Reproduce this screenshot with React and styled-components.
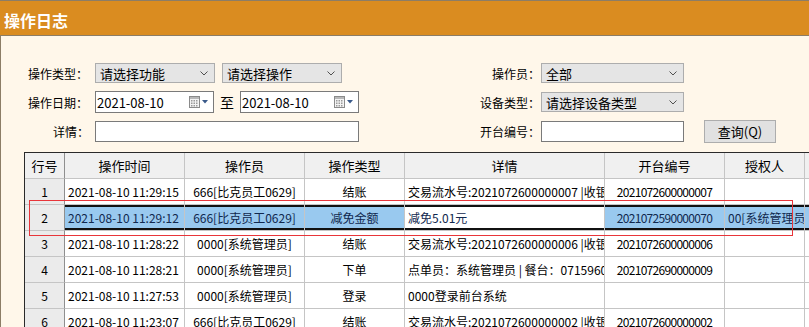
import React from 'react';
import styled, { createGlobalStyle } from 'styled-components';

const GlobalStyle = createGlobalStyle`
  html, body { margin: 0; padding: 0; background: #fff7ea; }
  body {
    font-family: "Noto Sans CJK SC", "Liberation Sans", sans-serif;
    font-size: 12px;
    color: #000;
    overflow: hidden;
  }
`;

const Page = styled.div`
  position: relative;
  width: 809px;
  height: 327px;
  overflow: hidden;
  background: #fff7ea;
`;

const TitleBar = styled.div`
  height: 30px;
  padding: 4px 0 0 4px;
  line-height: 30px;
  background: #da8c20;
  border-top: 1px solid #8c7d66;
  border-bottom: 1px solid #8c7d66;
  color: #fff;
  font-size: 16px;
  font-weight: bold;
`;

const Body = styled.div`
  border-left: 1px solid #8c7d66;
  height: 300px;
`;

const Form = styled.div`
  display: grid;
  grid-template-columns: 94px 264px 182px 143px 20px 72px;
  grid-auto-rows: 22px;
  row-gap: 7px;
  padding-top: 26px;
  align-items: center;
`;

const Label = styled.div`
  text-align: right;
  padding-right: ${p => p.pad}px;
  white-space: nowrap;
`;

const Pair = styled.div`
  display: flex;
  align-items: center;
  gap: ${p => p.gap || 0}px;
`;

const Select = styled.div`
  box-sizing: border-box;
  width: ${p => p.w}px;
  height: 20px;
  border: 1px solid #adadad;
  background: #e5e5e5;
  display: flex;
  align-items: center;
  justify-content: space-between;
  padding: 0 6px 0 4px;
  font-size: 13px;
`;

const DateBox = styled.div`
  box-sizing: border-box;
  width: 119px;
  height: 22px;
  border: 1px solid #7a7a7a;
  background: #fff;
  display: flex;
  align-items: center;
  justify-content: space-between;
  padding: 0 5px 0 1px;
  font-size: 13px;
`;

const DateIcons = styled.div`
  display: flex;
  align-items: center;
  gap: 2px;
`;

const To = styled.div`
  width: 26px;
  text-align: center;
  font-size: 14px;
`;

const TextBox = styled.div`
  box-sizing: border-box;
  width: ${p => p.w}px;
  height: 21px;
  border: 1px solid #7a7a7a;
  background: #fff;
`;

const Button = styled.div`
  grid-column: 6;
  box-sizing: border-box;
  height: 23px;
  border: 1px solid #adadad;
  background: #e1e1e1;
  display: flex;
  align-items: center;
  justify-content: center;
  font-size: 13px;
`;

const Grid = styled.table`
  margin: 10px 0 0 23px;
  border-collapse: separate;
  border-spacing: 0;
  table-layout: fixed;
  width: 881px;
  border-top: 1px solid #2a2a2a;
  border-left: 1px solid #2a2a2a;
`;

const Head = styled.th`
  box-sizing: border-box;
  width: ${p => p.w}px;
  height: 26px;
  padding: 0;
  font-weight: normal;
  background: #f0f0f0;
  border-right: 1px solid ${p => (p.num ? '#8f8f8f' : '#c5c5c5')};
  border-bottom: 1px solid #c5c5c5;
  text-align: center;
  font-size: 13px;
`;

const Cell = styled.td`
  box-sizing: border-box;
  height: 26px;
  padding: 0;
  padding-left: ${p => (p.align === 'left' ? 3 : 0)}px;
  text-align: ${p => p.align || 'center'};
  letter-spacing: ${p => (p.tight ? '-0.7px' : 'normal')};
  white-space: nowrap;
  overflow: hidden;
  background: ${p => (p.sel ? (p.edit ? '#fff' : '#99c9ef') : '#fff')};
  color: ${p => (p.sel ? '#10284e' : '#000')};
  border-right: 1px solid #c5c5c5;
  border-bottom: 1px solid #c5c5c5;
  box-shadow: ${p => (p.sel ? 'inset 0 2px #111, inset 0 -2px #111' : 'none')};
`;

const NumCell = styled.td`
  box-sizing: border-box;
  height: 26px;
  padding: 0;
  text-align: center;
  background: #ebebeb;
  border-right: 1px solid #8f8f8f;
  border-bottom: 1px solid #c5c5c5;
`;

const Marker = styled.div`
  position: absolute;
  left: 29px;
  top: 200px;
  width: 764px;
  height: 36px;
  box-sizing: border-box;
  border: 1px solid #e8353a;
  pointer-events: none;
`;

const Chevron = () => (
  <svg width="8" height="5" viewBox="0 0 8 5">
    <path d="M0.5 0.5 L4 4 L7.5 0.5" fill="none" stroke="#505050" strokeWidth="1" />
  </svg>
);

const Calendar = () => (
  <DateIcons>
    <svg width="11" height="12" viewBox="0 0 11 12">
      <rect x="0.5" y="0.5" width="10" height="11" fill="#f4f4f4" stroke="#8a8a8a" />
      <rect x="1" y="1" width="9" height="2" fill="#b8b8b8" />
      {[3, 5.5, 8].map(y => [2, 4.5, 7].map(x => (
        <rect key={x + '-' + y} x={x} y={y + 1} width="1.5" height="1.5" fill="#9a9a9a" />
      )))}
    </svg>
    <svg width="6" height="4" viewBox="0 0 6 4">
      <path d="M0 0 L6 0 L3 3.5 Z" fill="#3a5a8a" />
    </svg>
  </DateIcons>
);

const columns = [
  { title: '行号', w: 40 },
  { title: '操作时间', w: 120 },
  { title: '操作员', w: 120 },
  { title: '操作类型', w: 100 },
  { title: '详情', w: 200 },
  { title: '开台编号', w: 120 },
  { title: '授权人', w: 80 },
  { title: '', w: 100 },
];

const rows = [
  ['2021-08-10 11:29:15', '666[比克员工0629]', '结账', '交易流水号:2021072600000007 |收银员:比克员工0629', '2021072600000007', ''],
  ['2021-08-10 11:29:12', '666[比克员工0629]', '减免金额', '减免5.01元', '2021072590000070', '00[系统管理员]'],
  ['2021-08-10 11:28:22', '0000[系统管理员]', '结账', '交易流水号:2021072600000006 |收银员:系统管理员', '2021072600000006', ''],
  ['2021-08-10 11:28:21', '0000[系统管理员]', '下单', '点单员：系统管理员 | 餐台：0715960', '2021072690000009', ''],
  ['2021-08-10 11:27:53', '0000[系统管理员]', '登录', '0000登录前台系统', '', ''],
  ['2021-08-10 11:23:07', '666[比克员工0629]', '结账', '交易流水号:2021072600000002 |收银员:比克员工0629', '2021072600000002', ''],
];

const aligns = ['left', 'center', 'center', 'left', 'center', 'left'];

export default function App() {
  return (
    <Page>
      <GlobalStyle />
      <TitleBar>操作日志</TitleBar>
      <Body>
        <Form>
          <Label pad={7}>操作类型：</Label>
          <Pair gap={7}>
            <Select w={120}>请选择功能<Chevron /></Select>
            <Select w={120}>请选择操作<Chevron /></Select>
          </Pair>
          <Label pad={1}>操作员：</Label>
          <Select w={143}>全部<Chevron /></Select>
          <div />
          <div />

          <Label pad={7}>操作日期：</Label>
          <Pair>
            <DateBox>2021-08-10<Calendar /></DateBox>
            <To>至</To>
            <DateBox>2021-08-10<Calendar /></DateBox>
          </Pair>
          <Label pad={1}>设备类型：</Label>
          <Select w={143}>请选择设备类型<Chevron /></Select>
          <div />
          <div />

          <Label pad={6}>详情：</Label>
          <TextBox w={264} />
          <Label pad={1}>开台编号：</Label>
          <TextBox w={143} />
          <Button>查询(Q)</Button>
        </Form>

        <Grid>
          <thead>
            <tr>
              {columns.map((c, i) => (
                <Head key={i} w={c.w} num={i === 0}>{c.title}</Head>
              ))}
            </tr>
          </thead>
          <tbody>
            {rows.map((r, ri) => {
              const sel = ri === 1;
              return (
                <tr key={ri}>
                  <NumCell>{ri + 1}</NumCell>
                  {r.map((v, ci) => (
                    <Cell
                      key={ci}
                      align={ci === 0 ? 'left' : aligns[ci]}
                      tight={ci === 4}
                      sel={sel}
                      edit={sel && ci === 3}
                    >
                      {v}
                    </Cell>
                  ))}
                  <Cell sel={sel} />
                </tr>
              );
            })}
          </tbody>
        </Grid>
      </Body>
      <Marker />
    </Page>
  );
}
